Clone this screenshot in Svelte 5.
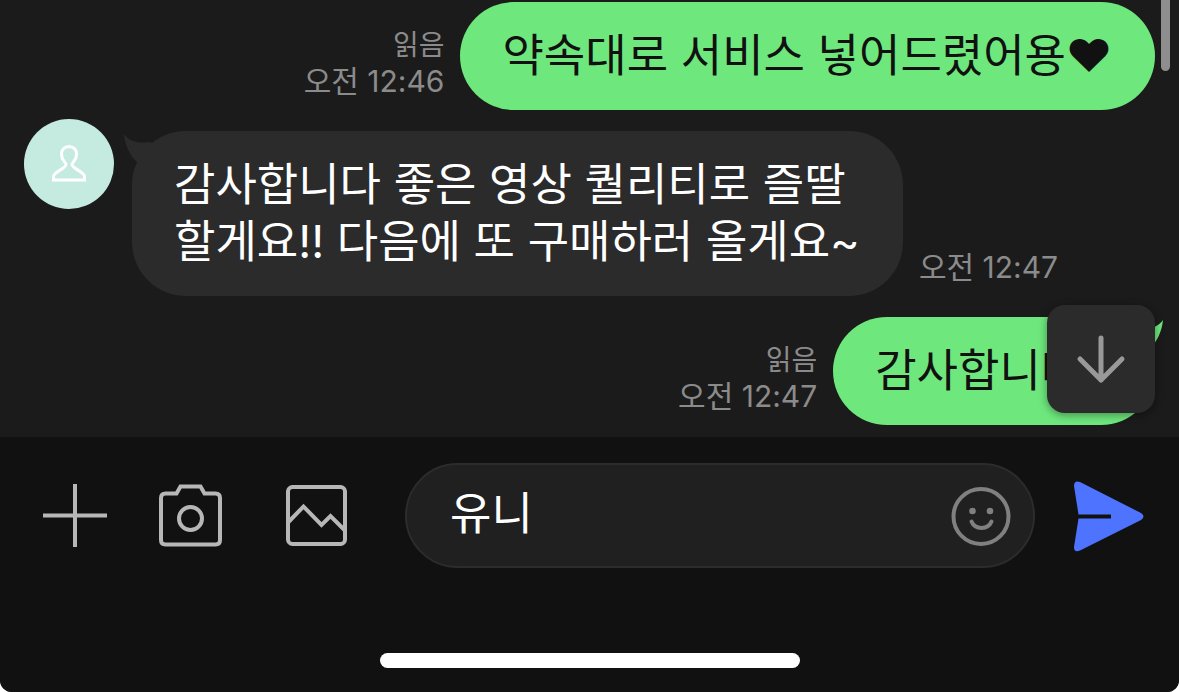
<script>
    const messages = [
        { id: 1, mine: true, tail: false, read: true, time: "오전 12:46", text: "약속대로 서비스 넣어드렸어용♥" },
        {
            id: 2,
            mine: false,
            tail: true,
            read: false,
            time: "오전 12:47",
            text: "감사합니다 좋은 영상 퀄리티로 즐딸\n할게요!! 다음에 또 구매하러 올게요~",
        },
        { id: 3, mine: true, tail: true, read: true, time: "오전 12:47", text: "감사합니다~" },
    ];

    let draft = $state("유니");
    let list;

    function scrollToLatest() {
        list.scrollTop = list.scrollHeight;
    }

    function send(event) {
        event.preventDefault();
        draft = "";
    }
</script>

<div class="screen">
    <main class="chat">
        <div class="messages" bind:this={list}>
            {#each messages as message (message.id)}
                <div class="row" class:mine={message.mine}>
                    {#if !message.mine}
                        <div class="avatar">
                            <svg viewBox="0 0 90 90" aria-hidden="true">
                                <path d="M29.500 61V57.500C29.500 53 42 49.500 42 45.500C42 43.500 37.500 41.500 37.500 35.500C37.500 30.500 40.500 27.500 45 27.500C49.500 27.500 52.500 30.500 52.500 35.500C52.500 41.500 48 43.500 48 45.500C48 49.500 60.500 53 60.500 57.500V61Z" />
                            </svg>
                        </div>
                    {/if}

                    <div class="bubble">
                        {#if message.tail}
                            <svg class="tail" viewBox="0 0 40 40" aria-hidden="true">
                                <path d="M0 0C5 7 14 10 25 8L40 12L20 40L13 28C6 22 1 11 0 0Z" />
                            </svg>
                        {/if}
                        <p>{message.text}</p>
                    </div>

                    <div class="meta">
                        {#if message.read}
                            <span>읽음</span>
                        {/if}
                        <time>{message.time}</time>
                    </div>
                </div>
            {/each}
        </div>

        <div class="scroll-thumb"></div>

        <button class="btn-latest" type="button" aria-label="맨 아래로" onclick={scrollToLatest}>
            <svg viewBox="0 0 108 108" aria-hidden="true">
                <path d="M54 33V75M33 54L54 75L75 54" />
            </svg>
        </button>
    </main>

    <footer>
        <form onsubmit={send}>
            <div class="tools">
                <button type="button" aria-label="추가">
                    <svg viewBox="0 0 64 64" aria-hidden="true">
                        <path d="M32 0V63M0 31.500H64" />
                    </svg>
                </button>
                <button type="button" aria-label="카메라">
                    <svg viewBox="0 0 64 64" aria-hidden="true">
                        <path d="M6 9.500H17.500L21.500 2.500H41.500L45.500 9.500H56.500Q61 9.500 61 14V56Q61 60.500 56.500 60.500H6.500Q2 60.500 2 56V14Q2 9.500 6.500 9.500Z" />
                        <circle cx="31.500" cy="34.500" r="11.500" />
                    </svg>
                </button>
                <button type="button" aria-label="사진">
                    <svg viewBox="0 0 64 64" aria-hidden="true">
                        <rect x="3" y="3" width="57" height="57" rx="4.500" />
                        <path d="M3 38.500L18.500 22.500L36.500 41L45.500 32L60 46.500" />
                    </svg>
                </button>
            </div>

            <div class="field">
                <input type="text" aria-label="메시지 입력" autocomplete="off" bind:value={draft} />
                <button type="button" aria-label="스티커">
                    <svg viewBox="0 0 60 60" aria-hidden="true">
                        <circle class="line" cx="30" cy="30.500" r="27.500" />
                        <circle cx="21.500" cy="25" r="3.300" />
                        <circle cx="39" cy="25" r="3.300" />
                        <path class="line" d="M20.500 35.500C24 44 37 44 40.500 35.500" />
                    </svg>
                </button>
            </div>

            <button class="btn-send" type="submit" aria-label="보내기">
                <svg viewBox="0 0 72 72" aria-hidden="true">
                    <path d="M2 6Q2 0 8 2L69 33Q74 36.500 69 40L8 70.500Q2 73 2 67L6.500 38.500H39V34.500H6.500Z" />
                </svg>
            </button>
        </form>

        <div class="home-bar"></div>
    </footer>
</div>

<style>
    :global(body) {
        margin: 0;
        background: #fff;
    }

    .screen {
        display: flex;
        flex-direction: column;
        height: 100vh;
        overflow: hidden;
        border-radius: 0 0 12px 12px;
        background: #1b1b1b;
        color: #fff;
        font-family: Inter, "Noto Sans CJK KR", sans-serif;
    }

    button {
        display: block;
        padding: 0;
        border: 0;
        background: none;
        cursor: pointer;
    }

    svg {
        display: block;
        width: 100%;
        height: 100%;
    }

    .chat {
        position: relative;
        flex: 1;
        min-height: 0;
    }

    .messages {
        display: flex;
        flex-direction: column;
        justify-content: flex-end;
        gap: 21px;
        box-sizing: border-box;
        height: 100%;
        padding: 0 24px 12px;
        overflow: hidden;
    }

    .row {
        display: flex;
        align-items: flex-end;
        gap: 16px;
    }

    .row.mine {
        flex-direction: row-reverse;
    }

    .avatar {
        flex: none;
        align-self: flex-start;
        margin: -12px 2px 0 0;
        width: 90px;
        height: 90px;
        border-radius: 50%;
        background: #c5ebe0;
    }

    .avatar path {
        fill: none;
        stroke: #fff;
        stroke-width: 3;
    }

    .bubble {
        position: relative;
        padding: 25px 43px 26px 42px;
        border-radius: 54px;
        background: #2b2b2b;
    }

    .mine .bubble {
        background: #6ee87d;
        color: #111;
    }

    .bubble p {
        margin: 0;
        font-size: 45px;
        line-height: 57px;
        white-space: pre-line;
    }

    .tail {
        position: absolute;
        top: 3px;
        left: -8px;
        width: 40px;
        height: 40px;
        fill: #2b2b2b;
    }

    .mine .tail {
        right: -8px;
        left: auto;
        transform: scaleX(-1);
        fill: #6ee87d;
    }

    .meta {
        display: flex;
        flex: none;
        flex-direction: column;
        padding-bottom: 11px;
        color: #8b8b8b;
        font-size: 30px;
        line-height: 36px;
    }

    .meta span {
        font-size: 28px;
    }

    .mine .meta {
        align-items: flex-end;
    }

    .scroll-thumb {
        position: absolute;
        top: 0;
        right: 9px;
        width: 9px;
        height: 71px;
        border-radius: 0 0 5px 5px;
        background: #8e8e8f;
    }

    .btn-latest {
        position: absolute;
        right: 24px;
        bottom: 24px;
        width: 108px;
        height: 108px;
        border-radius: 18px;
        background: #2b2b2b;
        box-shadow: 0 2px 8px rgba(0, 0, 0, 0.4);
    }

    .btn-latest path {
        fill: none;
        stroke: #999;
        stroke-width: 5;
        stroke-linecap: round;
        stroke-linejoin: round;
    }

    footer {
        padding: 26px 0 24px;
        background: #111;
    }

    form {
        display: flex;
        align-items: center;
        padding: 0 35px 0 43px;
    }

    .tools {
        display: grid;
        grid-template-columns: 116px 126px 120px;
    }

    .tools button {
        width: 64px;
        height: 64px;
    }

    .tools svg {
        fill: none;
        stroke: #b7b7b7;
        stroke-width: 4;
    }

    .field {
        display: flex;
        flex: 1;
        align-items: center;
        box-sizing: border-box;
        min-width: 0;
        height: 105px;
        margin-right: 37px;
        padding: 0 22px 0 43px;
        border: 2px solid #2c2c2c;
        border-radius: 53px;
        background: #202020;
    }

    .field input {
        flex: 1;
        min-width: 0;
        padding: 0 0 10px;
        border: 0;
        outline: 0;
        background: none;
        color: #fff;
        font-family: inherit;
        font-size: 45px;
    }

    .field button {
        width: 60px;
        height: 60px;
    }

    .field svg {
        fill: #808080;
    }

    .field .line {
        fill: none;
        stroke: #808080;
        stroke-width: 4;
        stroke-linecap: round;
    }

    .btn-send {
        width: 72px;
        height: 72px;
    }

    .btn-send svg {
        fill: #4e73ff;
    }

    .home-bar {
        width: 420px;
        max-width: 60%;
        height: 15px;
        margin: 85px auto 0;
        border-radius: 8px;
        background: #fff;
    }
</style>
